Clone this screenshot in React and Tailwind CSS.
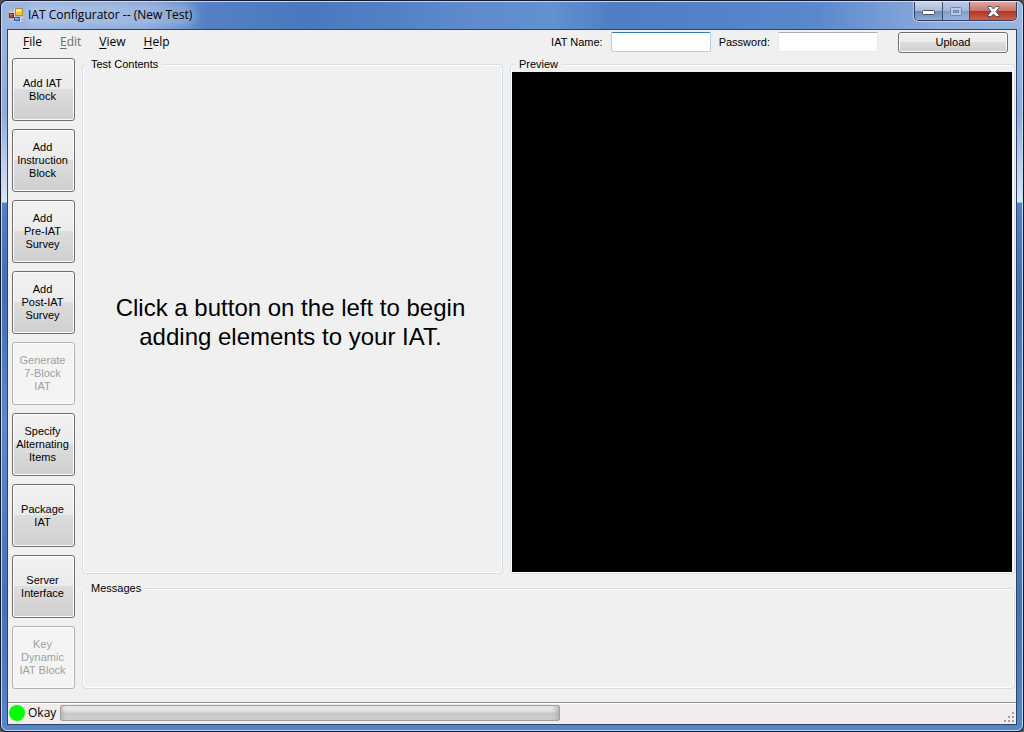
const tools = [
  { lines: ['Add IAT', 'Block'] },
  { lines: ['Add', 'Instruction', 'Block'] },
  { lines: ['Add', 'Pre-IAT', 'Survey'] },
  { lines: ['Add', 'Post-IAT', 'Survey'] },
  { lines: ['Generate', '7-Block', 'IAT'], disabled: true },
  { lines: ['Specify', 'Alternating', 'Items'] },
  { lines: ['Package', 'IAT'] },
  { lines: ['Server', 'Interface'] },
  { lines: ['Key', 'Dynamic', 'IAT Block'], disabled: true },
];

const face =
  'rounded-[3px] border border-[#707070] bg-[linear-gradient(#f2f2f2_0%,#ebebeb_49%,#dddddd_50%,#cfcfcf_100%)] shadow-[inset_0_0_0_1px_#fbfbfb] disabled:border-[#adb2b5] disabled:bg-none disabled:bg-[#f4f4f4] disabled:text-[#a0a0a0]';

function AppIcon() {
  return (
    <svg width="14" height="14" viewBox="0 0 14 14" aria-hidden="true">
      <rect width="14" height="14" fill="#b3b9c4" />
      <path d="M0 4h6M5.500 0v14M0 9.500h14M11.500 9v5" stroke="#d5dde9" />
      <rect x="0.5" y="5.5" width="4" height="4" fill="#cf3a25" stroke="#9c1c12" />
      <rect x="1" y="6" width="2" height="1" fill="#ef8a74" />
      <rect x="6.5" y="0.5" width="7" height="7" fill="#f3c136" stroke="#b08a2a" />
      <rect x="7" y="1" width="5" height="3" fill="#ffe58f" />
      <rect x="5.5" y="9.5" width="5" height="3" fill="#5b8fe8" stroke="#2f60bd" />
      <rect x="6" y="10" width="3" height="1" fill="#a3c4fa" />
    </svg>
  );
}

function TitleBar() {
  return (
    <header className="flex h-[27px] items-start justify-between pr-[5px] pl-[7px]">
      <div className="flex h-[26px] items-center gap-[5px]">
        <AppIcon />
        <h1 className="rounded-full bg-white/20 font-['Open_Sans',sans-serif] text-[12px] leading-4 text-black shadow-[0_0_8px_4px_rgba(255,255,255,0.2)]">
          IAT Configurator -- (New Test)
        </h1>
      </div>
      <div className="flex h-[19px] overflow-hidden rounded-b-[5px] border border-t-0 border-[#2f3f63] shadow-[0_0_0_1px_rgba(255,255,255,0.4)]">
        <button type="button" aria-label="Minimize" className="flex w-7 items-center justify-center border-r border-[#3a4c72] bg-[linear-gradient(#c9d6ea_0%,#a9bbd9_48%,#7189b6_50%,#8fa9d4_100%)]">
          <svg width="13" height="6" viewBox="0 0 13 6" className="mt-1"><rect x="0.5" y="0.5" width="12" height="4" rx="1" fill="#fff" stroke="#4a5164" /></svg>
        </button>
        <button type="button" aria-label="Maximize" disabled className="flex w-[27px] items-center justify-center border-r border-[#3a4c72] bg-[linear-gradient(#b9cae6_0%,#a3b8dc_48%,#839ecd_50%,#98b2dd_100%)]">
          <svg width="12" height="9" viewBox="0 0 12 9"><rect x="0.5" y="0.5" width="11" height="8" rx="1" fill="#b9cae5" stroke="#7287ae" /><rect x="3.5" y="3.5" width="5" height="2" fill="#91a9d2" stroke="#7287ae" /></svg>
        </button>
        <button type="button" aria-label="Close" className="flex w-[46px] items-center justify-center bg-[linear-gradient(#dba89f_0%,#cb7467_48%,#b13322_50%,#cf6044_100%)]">
          <svg width="13" height="11" viewBox="0 0 13 11"><path d="M1 .5h3.200l2.300 2.500L8.800 .5H12v1.300L9 5.500l3 3.500v1.500H8.800L6.500 8 4.200 10.500H1V9l3-3.500L1 1.800z" fill="#fff" stroke="#50526a" /></svg>
        </button>
      </div>
    </header>
  );
}

function MenuItem({ name, disabled }) {
  return (
    <button type="button" disabled={disabled} className="text-black disabled:text-[#6d6d6d]">
      <span className="underline underline-offset-2">{name[0]}</span>
      {name.slice(1)}
    </button>
  );
}

function Group({ title, className, children }) {
  return (
    <fieldset className={`min-w-0 rounded-[4px] border border-[#d5dfe5] shadow-[inset_0_0_0_1px_#ffffff] ${className}`}>
      <legend className="ml-1 bg-[#f0f0f0] px-1 leading-[13px]">{title}</legend>
      {children}
    </fieldset>
  );
}

export default function App() {
  return (
    <div className="min-h-screen bg-[#505050] font-['Liberation_Sans',Arial,sans-serif] text-[11px] text-black">
      <div className="flex min-h-screen flex-col rounded-[7px] border border-[#14182a] bg-[linear-gradient(#9fb9e2_0px,#8eabdb_110px,#dce6f4_201px,#5282c6_202px,#3f6fb4_290px,#5a8acc_420px,#4472b6_600px,#5685c8_100%)] bg-clip-padding">
        <div className="flex flex-1 flex-col rounded-[6px] border border-[#c4d8f2] bg-[linear-gradient(to_right,#9db7e1_0%,#86a5d9_14%,#5580c4_20%,#4a78be_30%,#5380c5_38%,#5f8bce_46%,#6290d0_54%,#4f7ec4_60%,#5482c8_70%,#5b88cd_80%,#8facdc_92%,#9bb5e0_100%)] bg-[length:100%_28px] bg-no-repeat">
          <TitleBar />
          <div className="mx-[5px] mb-[5px] flex flex-1 flex-col border border-[#b9cfea]">
            <main className="flex flex-1 flex-col bg-[#f0f0f0] outline outline-[#2c4468]">
              <div className="flex h-7 items-center justify-between pr-2 pb-1 pl-[15px]">
                <nav className="flex items-center gap-[18px] font-['Open_Sans',sans-serif] text-[12px] leading-4">
                  <MenuItem name="File" />
                  <MenuItem name="Edit" disabled />
                  <MenuItem name="View" />
                  <MenuItem name="Help" />
                </nav>
                <div className="flex items-center">
                  <label htmlFor="iat-name">IAT Name:</label>
                  <input id="iat-name" type="text" className="ml-2 h-5 w-[100px] rounded-[2px] border border-[#b5cfe7] border-t-[#3d7bad] bg-white px-1 outline-none" />
                  <label htmlFor="password" className="ml-2">Password:</label>
                  <input id="password" type="password" className="ml-2 h-5 w-[100px] border border-[#e3e9ef] border-t-[#abadb3] bg-white px-1 outline-none" />
                  <button type="button" className={`ml-5 h-[21px] w-[110px] ${face}`}>Upload</button>
                </div>
              </div>
              <div className="flex flex-1 gap-[7px] pr-px pb-[13px] pl-1">
                <div className="flex flex-col gap-2">
                  {tools.map((tool) => (
                    <button key={tool.lines.join(' ')} type="button" disabled={tool.disabled} className={`h-[63px] w-[63px] pr-[2px] leading-[13px] ${face}`}>
                      {tool.lines.map((line) => (
                        <span key={line} className="block whitespace-nowrap">{line}</span>
                      ))}
                    </button>
                  ))}
                </div>
                <div className="flex min-w-0 flex-1 flex-col gap-2">
                  <div className="grid flex-1 grid-cols-[5fr_6fr] gap-[7px]">
                    <Group title="Test Contents" className="h-full">
                      <div className="flex h-full items-center justify-center pr-7 pl-6 text-center text-[24px] leading-[29px]">
                        <p>Click a button on the left to begin adding elements to your IAT.</p>
                      </div>
                    </Group>
                    <Group title="Preview" className="flex h-full flex-col">
                      <div className="mt-px mr-[2px] mb-px ml-px h-full bg-black" />
                    </Group>
                  </div>
                  <Group title="Messages" className="h-[107px]" />
                </div>
              </div>
              <footer className="flex h-[22px] items-center border-t border-[#8c8c8c] bg-[#f1edec] pr-px pb-px pl-px font-['Open_Sans',sans-serif] text-[12px] shadow-[inset_0_1px_0_#ffffff]">
                <svg width="16" height="16" viewBox="0 0 16 16" aria-hidden="true"><circle cx="8" cy="8" r="8" fill="#00ff00" /></svg>
                <span className="ml-[3px] leading-4">Okay</span>
                <div role="progressbar" aria-label="Progress" aria-valuenow={0} className="ml-1 h-4 w-[500px] rounded-[2px] border border-[#9f9f9f] bg-[linear-gradient(#f0f0f0_0%,#dcdcdc_44%,#c6c6c6_50%,#d4d4d4_100%)] shadow-[inset_4px_0_4px_-3px_#a8a8a8,inset_-6px_0_6px_-4px_#a8a8a8]" />
                <svg width="11" height="11" viewBox="0 0 11 11" className="mt-2 ml-auto" aria-hidden="true">
                  <path d="M8 0h2v2h-2zM4 4h2v2h-2zM8 4h2v2h-2zM0 8h2v2h-2zM4 8h2v2h-2zM8 8h2v2h-2z" fill="#a0a0a0" />
                </svg>
              </footer>
            </main>
          </div>
        </div>
      </div>
    </div>
  );
}
